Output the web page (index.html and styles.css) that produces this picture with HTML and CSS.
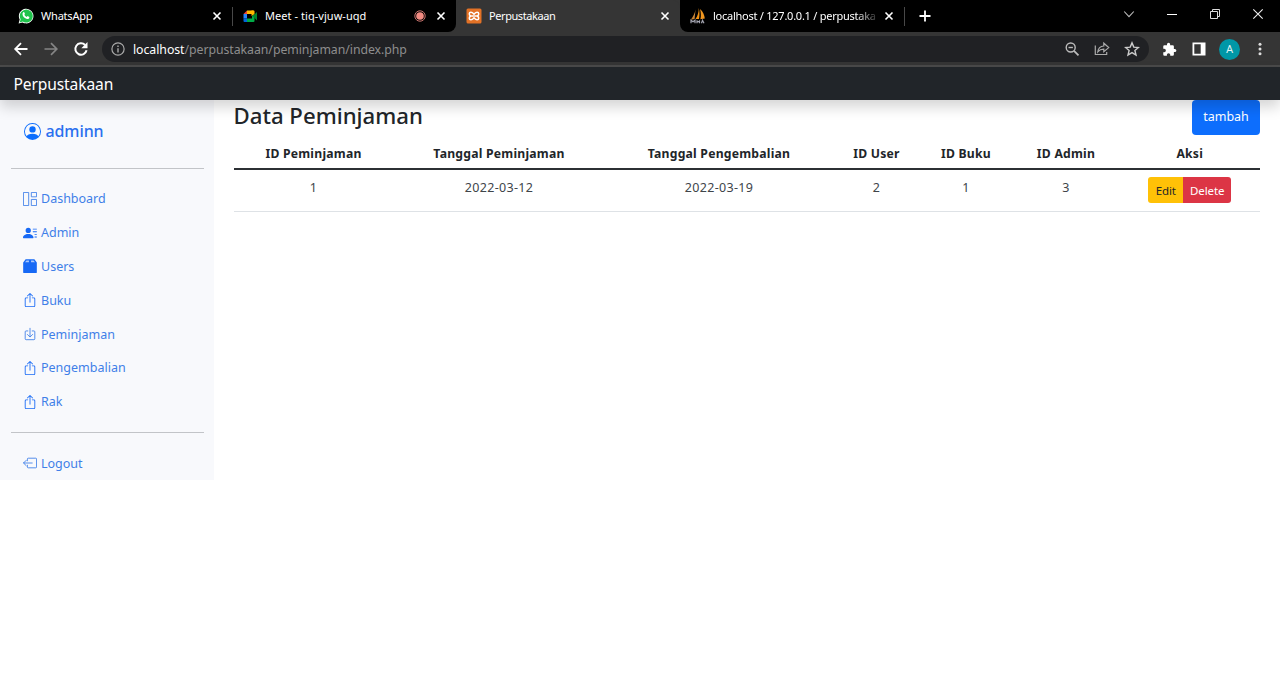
FILE: index.html
```html
<!DOCTYPE html>
<html lang="id">
<head>
<meta charset="utf-8">
<title>Perpustakaan</title>
<link rel="stylesheet" href="styles.css">
</head>
<body>
<svg class="defs" width="0" height="0">
  <symbol id="close" viewBox="0 0 10 10"><path d="M1.500 1.500l7 7M8.500 1.500l-7 7" stroke="#fff" stroke-width="1.600"/></symbol>
  <symbol id="box-up" viewBox="0 0 16 16"><path fill-rule="evenodd" d="M3.500 6a.5.5 0 0 0-.5.5v8a.5.5 0 0 0 .5.5h9a.5.5 0 0 0 .5-.5v-8a.5.5 0 0 0-.5-.5h-2a.5.5 0 0 1 0-1h2A1.500 1.500 0 0 1 14 6.500v8a1.500 1.500 0 0 1-1.500 1.500h-9A1.500 1.500 0 0 1 2 14.500v-8A1.500 1.500 0 0 1 3.500 5h2a.5.5 0 0 1 0 1h-2z"/><path fill-rule="evenodd" d="M7.646.146a.5.5 0 0 1 .708 0l3 3a.5.5 0 0 1-.708.708L8.500 1.707V10.500a.5.5 0 0 1-1 0V1.707L5.354 3.854a.5.5 0 1 1-.708-.708l3-3z"/></symbol>
</svg>

<header class="tabs">
  <div class="tab tab-whatsapp">
    <svg class="favicon" viewBox="0 0 16 16"><path d="M.6 15.500l1.100-4A7.300 7.300 0 1 1 4.500 14.400z" fill="#fff"/><path d="M1.700 14.400l.9-3.100A6.500 6.500 0 1 1 4.800 13.600z" fill="#1fc34c"/><path d="M5.300 4.300c.6-.5 1-.2 1.200.4l.5 1.200-.7.900c.5 1 1.300 1.700 2.400 2.200l.9-.9 1.700.8c.3 1.500-.9 2.200-2 2.100C6.700 10.600 4.500 8.200 4.500 6c0-.7.300-1.300.8-1.700z" fill="#fff"/></svg>
    <span class="tab-title t-wa">WhatsApp</span>
    <svg class="close"><use href="#close"/></svg>
  </div>
  <div class="tab tab-meet">
    <svg class="favicon" viewBox="0 0 16 16"><path d="M5 2.500V6H1.500z" fill="#ea4335"/><path d="M5 2.500h6.500V6H5z" fill="#ffba00"/><path d="M1.500 6H5v4.500H1.500z" fill="#2684fc"/><path d="M1.500 10.500H5V14H2.500a1 1 0 0 1-1-1z" fill="#0066da"/><path d="M5 10.500h5V8l2.500-2v7a1 1 0 0 1-1 1H5z" fill="#00ac47"/><path d="M9.500 5.500V2.500h2a1 1 0 0 1 1 1V6L9.500 8z" fill="#ffba00"/><path d="M10.500 8L15 4v8.500z" fill="#00832d"/></svg>
    <span class="tab-title t-meet">Meet - tiq-vjuw-uqd</span>
    <svg class="recording" viewBox="0 0 12 12"><circle cx="6" cy="6" r="5.200" fill="none" stroke="#c8736d"/><circle cx="6" cy="6" r="3.800" fill="#f28b82"/></svg>
    <svg class="close"><use href="#close"/></svg>
  </div>
  <div class="tab tab-active">
    <svg class="favicon" viewBox="0 0 16 16"><rect x=".5" y=".5" width="15" height="15" rx="1.500" fill="#e37226"/><path d="M7.800 8H4.700M8.200 8h3.100M4.700 8C2.800 7 2.700 4.300 4.900 4.300c1.700 0 2.200 1 3.100 2 .9-1 1.400-2 3.100-2 2.200 0 2.100 2.700.2 3.700 1.900 1 2 3.700-.2 3.700-1.700 0-2.200-1-3.100-2-.9 1-1.400 2-3.100 2C2.700 11.700 2.800 9 4.700 8z" fill="none" stroke="#fff" stroke-width="1.500"/></svg>
    <span class="tab-title t-active">Perpustakaan</span>
    <svg class="close"><use href="#close"/></svg>
  </div>
  <div class="tab tab-pma">
    <svg class="favicon" viewBox="0 0 16 16"><path d="M5.500 1.500L4.600 11 .8 11.700C3 9 4.800 5.500 5.500 1.500z" fill="#c98538"/><path d="M8.800 0c1 4 .8 7.500.2 11H5.500C7.700 8 8.700 4.500 8.800 0z" fill="#f29111"/><path d="M10 1c3 2.500 4.500 6 4.800 9.500l-4.400.8C11.200 8 11 5 10 1z" fill="#f0961f"/><path d="M1 15.200v-3l2 1.500 2-1.500v3m2-3v3m0-1.500h2.500m0-1.500v3m2 0l1-3 1.500 3" stroke="#a3a4b0" fill="none" stroke-width="1.200"/></svg>
    <span class="tab-title t-pma">localhost / 127.0.0.1 / perpustaka</span>
    <svg class="close"><use href="#close"/></svg>
  </div>
  <svg class="new-tab" viewBox="0 0 12 12"><path d="M6 .5v11M.5 6h11" stroke="#fff" stroke-width="1.800"/></svg>
  <div class="window-controls">
    <svg viewBox="0 0 12 12"><path d="M1.200 3.500L6 8.700l4.800-5.200" fill="none" stroke="#bbb" stroke-width="1.100"/></svg>
    <svg viewBox="0 0 12 12"><path d="M1 6.500h10" stroke="#fff"/></svg>
    <svg viewBox="0 0 12 12"><path d="M1.500 3.500h7v7h-7zM3.500 3.500v-2h7v7h-2" fill="none" stroke="#ddd"/></svg>
    <svg viewBox="0 0 12 12"><path d="M1.300 1.300l9.400 9.400M10.700 1.300l-9.400 9.400" stroke="#eee" stroke-width="1.100"/></svg>
  </div>
</header>

<div class="toolbar">
  <svg class="nav-icon" viewBox="0 0 16 16"><path d="M14.500 8H2.300M8 2.200L2.200 8 8 13.800" fill="none" stroke="#fff" stroke-width="1.800"/></svg>
  <svg class="nav-icon" viewBox="0 0 16 16"><path d="M1.500 8h12.200M8 2.200L13.800 8 8 13.800" fill="none" stroke="#858585" stroke-width="1.700"/></svg>
  <svg class="nav-icon" viewBox="0 0 16 16"><path d="M13.600 9.300A5.700 5.700 0 1 1 12.100 4" fill="none" stroke="#fff" stroke-width="2"/><path d="M14.500 1v6.200H8.300z" fill="#fff"/></svg>
  <div class="address">
    <svg class="info" viewBox="0 0 14 14" fill="none" stroke="#aaa" stroke-width="1.200"><circle cx="7" cy="7" r="6.100"/><path d="M7 6.200v4.300M7 3.600v1.400" stroke-width="1.400"/></svg>
    <span class="url"><b>localhost</b>/perpustakaan/peminjaman/index.php</span>
    <svg class="tool" viewBox="0 0 16 16" fill="none" stroke="#bbb" stroke-width="1.400"><circle cx="6.700" cy="6.500" r="4.500"/><path d="M10 9.800l4.500 4.500" stroke-width="1.800"/><path d="M4.500 6.500h4.400"/></svg>
    <svg class="tool" viewBox="0 0 16 16" fill="none" stroke="#aaa" stroke-width="1.200"><path d="M1.300 4.500v9h11.400v-2.500"/><path d="M3.800 10.800c.4-3.600 2.500-5.600 6-5.800V2.200L14.700 6.600 9.800 10.800V8.200c-2.700 0-4.500.8-6 2.600z"/></svg>
    <svg class="tool" viewBox="0 0 16 16" fill="none" stroke="#ccc" stroke-width="1.400"><path d="M8 1.900l1.800 4.200 4.600.4-3.500 3 1.100 4.500L8 11.600 4 14l1.100-4.500-3.500-3 4.600-.4z"/></svg>
  </div>
  <svg class="ext" viewBox="0 0 24 24" fill="#fff"><path d="M20.500 11H19V7a2 2 0 0 0-2-2h-4V3.500a2.500 2.500 0 0 0-5 0V5H4a2 2 0 0 0-2 2v3.800h1.500a2.700 2.700 0 0 1 0 5.400H2V20a2 2 0 0 0 2 2h3.800v-1.500a2.700 2.700 0 0 1 5.400 0V22H17a2 2 0 0 0 2-2v-4h1.500a2.500 2.500 0 0 0 0-5z"/></svg>
  <svg class="panel" viewBox="0 0 14 14"><path fill="#fff" fill-rule="evenodd" d="M.5.500h13v13H.5zM2.300 2.300v9.400h6.400V2.300z"/></svg>
  <span class="avatar">A</span>
  <svg class="dots" viewBox="0 0 4 14" fill="#ddd"><circle cx="2" cy="2.200" r="1.500"/><circle cx="2" cy="7" r="1.500"/><circle cx="2" cy="11.800" r="1.500"/></svg>
</div>

<nav class="navbar"><span class="brand">Perpustakaan</span></nav>

<div class="page">
  <aside class="sidebar">
    <a class="user"><svg viewBox="0 0 16 16"><path d="M11 6a3 3 0 1 1-6 0 3 3 0 0 1 6 0z"/><path fill-rule="evenodd" d="M0 8a8 8 0 1 1 16 0A8 8 0 0 1 0 8zm8-7a7 7 0 0 0-5.468 11.370C3.242 11.226 4.805 10 8 10s4.757 1.225 5.468 2.370A7 7 0 0 0 8 1z"/></svg><span>adminn</span></a>
    <hr>
    <ul class="menu">
      <li><svg viewBox="0 0 16 16" fill="none" stroke="currentColor"><path d="M.5.500h6v15h-6zM9.500.500h6v5h-6zM9.500 8.500h6v7h-6z"/></svg><span>Dashboard</span></li>
      <li><svg viewBox="0 0 16 16"><path d="M6 8a3 3 0 1 0 0-6 3 3 0 0 0 0 6zm-5 6s-1 0-1-1 1-4 6-4 6 3 6 4-1 1-1 1H1zM11 3.500a.5.5 0 0 1 .5-.5h4a.5.5 0 0 1 0 1h-4a.5.5 0 0 1-.5-.5zm.5 2.500a.5.5 0 0 0 0 1h4a.5.5 0 0 0 0-1h-4zm2 3a.5.5 0 0 0 0 1h2a.5.5 0 0 0 0-1h-2zm0 3a.5.5 0 0 0 0 1h2a.5.5 0 0 0 0-1h-2z"/></svg><span>Admin</span></li>
      <li><svg viewBox="0 0 16 16"><path d="M3 .300h10L15.800 4v11a1 1 0 0 1-1 1H1.200a1 1 0 0 1-1-1V4z"/><path d="M2.300 3.800l1.700-2.200h2.800v2.200zM9.200 3.800V1.600H12l1.700 2.200z" fill="#a9c8fd"/></svg><span>Users</span></li>
      <li><svg><use href="#box-up"/></svg><span>Buku</span></li>
      <li><svg viewBox="0 0 16 16" fill="none" stroke="currentColor" stroke-linecap="round" stroke-linejoin="round"><path d="M5.500 4.500h-2a1 1 0 0 0-1 1v8a1 1 0 0 0 1 1h9a1 1 0 0 0 1-1v-8a1 1 0 0 0-1-1h-2M8 1.500v9.500M5 8.500l3 3 3-3"/></svg><span>Peminjaman</span></li>
      <li><svg><use href="#box-up"/></svg><span>Pengembalian</span></li>
      <li><svg><use href="#box-up"/></svg><span>Rak</span></li>
    </ul>
    <hr>
    <ul class="menu">
      <li><svg viewBox="0 0 16 16" fill="none" stroke="currentColor" stroke-linecap="round" stroke-linejoin="round"><path d="M5 5.500v-2a1 1 0 0 1 1-1h8.500a1 1 0 0 1 1 1v9a1 1 0 0 1-1 1H6a1 1 0 0 1-1-1v-2M10.500 8H.7M3.600 5l-3 3 3 3"/></svg><span>Logout</span></li>
    </ul>
  </aside>
  <main class="content">
    <div class="heading"><h1>Data Peminjaman</h1><a class="btn btn-add"><span>tambah</span></a></div>
    <table class="loans">
      <colgroup><col class="c1"><col class="c2"><col class="c3"><col class="c4"><col class="c5"><col class="c6"><col class="c7"></colgroup>
      <thead><tr><th>ID Peminjaman</th><th>Tanggal Peminjaman</th><th>Tanggal Pengembalian</th><th>ID User</th><th>ID Buku</th><th>ID Admin</th><th>Aksi</th></tr></thead>
      <tbody><tr><td>1</td><td>2022-03-12</td><td>2022-03-19</td><td>2</td><td>1</td><td>3</td><td><div class="actions"><a class="btn btn-edit">Edit</a><a class="btn btn-delete">Delete</a></div></td></tr></tbody>
    </table>
  </main>
</div>
</body>
</html>
```
FILE: styles.css
```css
* { box-sizing: border-box; }
body { margin: 0; height: 682px; overflow: hidden; background: #fff; color: #212529; font-family: "Noto Sans", "Open Sans", sans-serif; font-size: 12.5px; }
.defs { position: absolute; }
svg { flex: none; display: block; }

.tabs { display: flex; align-items: center; height: 32px; background: linear-gradient(#353535, #353535) 440px 0 / 256px 32px no-repeat #000; color: #fff; }
.tab { display: flex; align-items: center; height: 32px; flex: none; font-size: 11px; background: #000; }
.tab-title { white-space: nowrap; margin-left: 7px; flex: 1; line-height: 20px; }
.favicon { width: 16px; height: 16px; }
.close { width: 10px; height: 10px; }
.tab-whatsapp { width: 232px; padding: 0 10px 0 18px; }
.tab-meet { width: 224px; padding: 0 10px 0 10px; border-radius: 0 0 8px 0; background: linear-gradient(#484848, #484848) 0 7px / 1px 19px no-repeat #000; }
.tab-active { width: 224px; padding: 0 10px; background: #353535; border-radius: 8px 8px 0 0; }
.tab-pma { width: 225px; padding: 0 11px 0 10px; border-radius: 0 0 0 8px; background: linear-gradient(#484848, #484848) 224px 7px / 1px 19px no-repeat #000; }
.t-wa { letter-spacing: -.2px; }
.t-meet { letter-spacing: .05px; }
.t-active { letter-spacing: -.42px; }
.t-pma { letter-spacing: -.25px; mask-image: linear-gradient(to right, #000 87%, rgba(0, 0, 0, .15)); margin-right: 7px; }
.recording { width: 12px; height: 12px; margin-right: 10px; }
.new-tab { width: 12px; height: 12px; margin-left: 14px; }
.window-controls { display: flex; gap: 31px; margin: -5px 16px 0 auto; }
.window-controls svg { width: 12px; height: 12px; }

.toolbar { display: flex; align-items: center; height: 35px; padding: 1px 17px 0 13px; background: #353535; border-bottom: 2px solid #4a4a4a; }
.nav-icon { width: 16px; height: 16px; margin-right: 14px; }
.address { display: flex; align-items: center; width: 1047px; height: 26px; margin-left: -1px; padding: 0 9px 0 9px; border-radius: 13px; background: #202124; color: #8e8e8e; }
.info { width: 14px; height: 14px; }
.url { margin-left: 8px; margin-right: auto; font-size: 12.3px; letter-spacing: -.05px; white-space: nowrap; }
.url b { color: #fff; font-weight: 400; }
.tool { width: 16px; height: 16px; margin-left: 14px; }
.ext { width: 15px; height: 15px; margin-left: 13px; }
.panel { width: 14px; height: 14px; margin-left: 15px; }
.avatar { width: 21px; height: 21px; margin-left: 13px; border-radius: 50%; background: #0097a7; color: #e4f4f6; font: 11px/21px Roboto, sans-serif; text-align: center; }
.dots { width: 4px; height: 14px; margin-left: 18px; }

.navbar { position: relative; height: 33px; padding-left: 13.5px; background: #212529; color: #fff; box-shadow: 0 7px 14px rgba(0, 0, 0, .17); }
.brand { font-size: 15.6px; letter-spacing: -.13px; line-height: 34px; }

.page { display: flex; align-items: flex-start; }
.sidebar { width: 213.5px; height: 380px; padding: 0 10px 0 10.5px; background: #f8f9fc; color: #2b70ef; }
.user { display: flex; align-items: center; height: 68px; padding: 0 0 6px 13px; font-size: 16px; font-weight: 500; letter-spacing: -.1px; }
.user svg { width: 17px; height: 17px; margin-right: 5px; fill: #0d6efd; }
.sidebar hr { height: 1px; margin: 0; border: 0; background: #c2c4c8; }
.menu { margin: 0; padding: 13px 12.5px 13px; list-style: none; color: #3f7fe8; }
.menu li { display: flex; align-items: center; height: 33.800px; }
.menu svg { width: 14px; height: 14px; margin-right: 4px; }
.menu svg:not([fill]) { fill: #1769f5; }
.menu svg:has(use) { fill: #4681e8; }
hr + .menu:last-child { padding-top: 14px; }

.content { width: 1026.5px; margin-left: 20px; }
.heading { display: flex; justify-content: space-between; height: 37px; }
h1 { margin: 0; font-size: 22.200px; font-weight: 500; line-height: 31px; }
.btn { display: block; color: #fff; text-align: center; white-space: nowrap; }
.btn-add { position: relative; z-index: -1; width: 68px; height: 35px; border-radius: 4px; background: #0d6efd; line-height: 34px; }
.loans { width: 1026.5px; table-layout: fixed; border-collapse: separate; border-spacing: 0; text-align: center; }
.c1 { width: 160px; } .c2 { width: 211px; } .c3 { width: 229px; } .c4 { width: 86px; } .c5 { width: 93px; } .c6 { width: 107px; } .c7 { width: 140.5px; }
th { height: 33px; padding: 1px 0 0; border-bottom: 2px solid #2c3034; font-size: 12.200px; font-weight: 700; letter-spacing: .23px; white-space: nowrap; }
td { height: 42px; padding: 7px 0 0; border-bottom: 1px solid #dee2e6; vertical-align: top; line-height: 21px; letter-spacing: .3px; color: #40454a; }
.actions { display: flex; justify-content: center; }
.actions .btn { height: 26px; line-height: 27px; font-size: 11.500px; letter-spacing: -.1px; }
.actions .btn-edit { width: 35px; border-radius: 3px 0 0 3px; background: #ffc107; color: #212529; }
.actions .btn-delete { width: 48px; border-radius: 0 3px 3px 0; background: #dc3545; }
```
